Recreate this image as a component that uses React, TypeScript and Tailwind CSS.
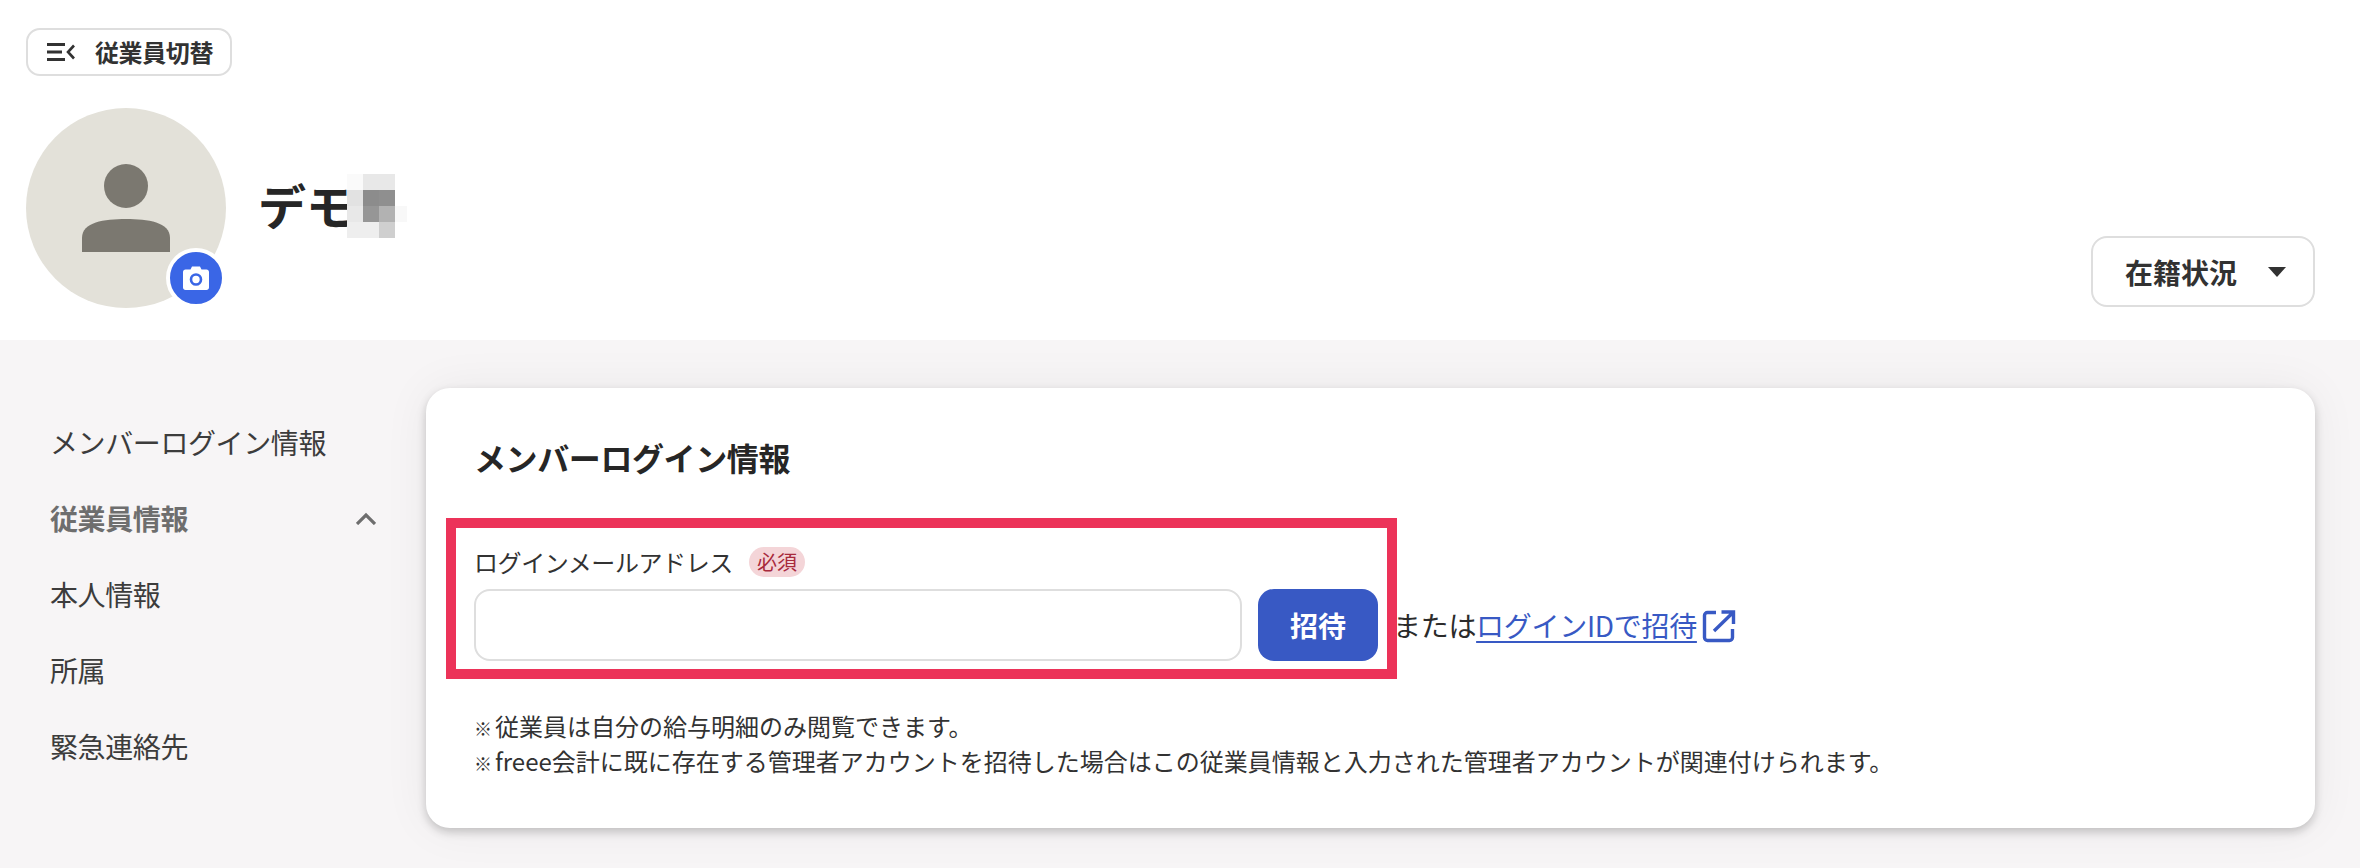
import React from "react";

function Mosaic() {
  const cells: [number, number, string][] = [
    [0, 0, "#fafafa"], [1, 0, "#e8e8e8"], [2, 0, "#e8e8e8"],
    [0, 1, "#e2e2e2"], [1, 1, "#8c8c8c"], [2, 1, "#8f8f8f"],
    [0, 2, "#e8e8e8"], [1, 2, "#969696"], [2, 2, "#b2b2b2"], [3, 2, "#f8f8f8"],
    [0, 3, "#eeeeee"], [1, 3, "#eeeeee"], [2, 3, "#cfcfcf"],
  ];
  return (
    <svg width="60" height="64" viewBox="0 0 60 64" className="shrink-0 -ml-[7px] mb-[4px]" shapeRendering="crispEdges">
      {cells.map(([x, y, c], i) => (
        <rect key={i} x={x * 16} y={y * 16} width="16" height="16" fill={c} />
      ))}
    </svg>
  );
}

function NavRow({ children, bold }: { children: React.ReactNode; bold?: boolean }) {
  return (
    <div className={`h-[76px] flex items-center justify-between text-[28px] tracking-[-0.4px] ${bold ? "font-bold text-[#6e6e6e]" : "text-[#3c3c3c]"}`}>
      {children}
    </div>
  );
}

export default function App() {
  return (
    <div className="min-h-[868px] bg-[#f7f5f6] text-[#2b2b2b] font-['Noto_Sans_CJK_JP','Liberation_Sans',sans-serif] overflow-hidden">
      <header className="relative z-10 bg-white h-[340px] pl-[26px] pr-[45px] pt-[28px] flex flex-col">
        <button className="self-start w-[206px] h-[48px] rounded-[14px] border-2 border-[#dedede] flex items-center pl-[19px] text-[24px] tracking-[-0.4px] font-bold text-[#323232]">
          <svg width="28" height="20" viewBox="0 0 28 20" className="mr-[20px] shrink-0" fill="none" stroke="#323232" strokeWidth="3">
            <path d="M0 2.5H18M0 10H15M0 17.5H18" />
            <path d="M27 3.5L21 10L27 16.5" strokeWidth="2.6" />
          </svg>
          従業員切替
        </button>
        <div className="flex items-end justify-between mt-[32px]">
          <div className="flex items-center">
            <div className="relative w-[200px] h-[200px] rounded-full bg-[#e3e1d9] flex items-center justify-center">
              <svg width="88" height="88" viewBox="0 0 88 88" fill="#7b7870">
                <circle cx="44" cy="22" r="22" />
                <path d="M0 88V74C0 58 22 55 44 55C66 55 88 58 88 74V88Z" />
              </svg>
              <div className="absolute left-[140px] top-[140px] w-[60px] h-[60px] rounded-full bg-[#3a66e6] border-[4px] border-white flex items-center justify-center">
                <svg width="26" height="24" viewBox="0 0 26 24">
                  <path d="M2.5 3.5H7.5L9 0.5H17L18.5 3.5H23.5C24.9 3.5 26 4.6 26 6V21.5C26 22.9 24.9 24 23.5 24H2.5C1.1 24 0 22.9 0 21.5V6C0 4.6 1.1 3.5 2.5 3.5Z" fill="white" />
                  <circle cx="13" cy="13.5" r="5" fill="none" stroke="#3a66e6" strokeWidth="2.6" />
                </svg>
              </div>
            </div>
            <div className="flex items-center ml-[32px] text-[48px] font-bold text-[#262626] leading-none">
              <span className="pb-[8px]">デモ</span>
              <Mosaic />
            </div>
          </div>
          <button className="w-[224px] h-[71px] mb-[1px] rounded-[16px] border-2 border-[#dedede] flex items-center pl-[32px] text-[28px] font-bold text-[#323232]">
            在籍状況
            <svg width="18" height="10" viewBox="0 0 18 10" className="ml-[31px]">
              <path d="M0 0H18L9 10Z" fill="#323232" />
            </svg>
          </button>
        </div>
      </header>
      <main className="flex pl-[50px] pr-[45px] pt-[48px] pb-[40px]">
        <nav className="w-[330px] shrink-0 pt-[16px]">
          <div className="w-[326px]">
            <NavRow>メンバーログイン情報</NavRow>
            <NavRow bold>
              従業員情報
              <svg width="20" height="13" viewBox="0 0 20 13" fill="none" stroke="#6e6e6e" strokeWidth="3.2">
                <path d="M1 12L10 3L19 12" />
              </svg>
            </NavRow>
            <NavRow>本人情報</NavRow>
            <NavRow>所属</NavRow>
            <NavRow>緊急連絡先</NavRow>
          </div>
        </nav>
        <section className="ml-[46px] flex-1 h-[440px] bg-white rounded-[24px] shadow-[0_4px_10px_rgba(0,0,0,0.2),0_0_48px_rgba(0,0,0,0.06)] pl-[48px] pt-[45px] relative">
          <h2 className="text-[32px] tracking-[-0.4px] font-bold leading-[48px] text-[#262626]">メンバーログイン情報</h2>
          <div className="mt-[66px]">
            <div className="flex items-center h-[30px]">
              <span className="text-[24px] tracking-[-0.4px] text-[#323232]">ログインメールアドレス</span>
              <span className="ml-[16px] w-[56px] h-[30px] rounded-full bg-[#f4d5d8] text-[#a82a3c] text-[20px] flex items-center justify-center">必須</span>
            </div>
            <div className="flex items-center mt-[12px]">
              <div className="w-[768px] h-[72px] rounded-[16px] border-2 border-[#dedede] bg-white" />
              <button className="ml-[16px] w-[120px] h-[72px] rounded-[16px] bg-[#3859c4] text-white text-[28px] font-bold">招待</button>
              <span className="ml-[15px] text-[28px] tracking-[-0.3px]">または</span>
              <a className="text-[28px] tracking-[-0.3px] text-[#3859c4] underline underline-offset-4">ログインIDで招待</a>
              <svg width="34" height="34" viewBox="0 0 34 34" className="ml-[5px] mt-[2px]" fill="none" stroke="#3859c4" strokeWidth="3.4">
                <path d="M14 3.5H5.5a3 3 0 0 0-3 3v22a3 3 0 0 0 3 3h22a3 3 0 0 0 3-3V20" />
                <path d="M12 22L31 3.5M19.5 3H31.5V15" />
              </svg>
            </div>
          </div>
          <div className="mt-[47px] text-[24px] text-[#323232]">
            <p className="h-[35px] leading-[35px]"><span className="text-[18px] leading-none font-medium mr-[3px]">※</span>従業員は自分の給与明細のみ閲覧できます。</p>
            <p className="h-[35px] leading-[35px]"><span className="text-[18px] leading-none font-medium mr-[3px]">※</span>freee会計に既に存在する管理者アカウントを招待した場合はこの従業員情報と入力された管理者アカウントが関連付けられます。</p>
          </div>
          <div className="absolute left-[20px] top-[130px] w-[951px] h-[161px] border-[10px] border-[#ec3359] pointer-events-none" />
        </section>
      </main>
    </div>
  );
}
